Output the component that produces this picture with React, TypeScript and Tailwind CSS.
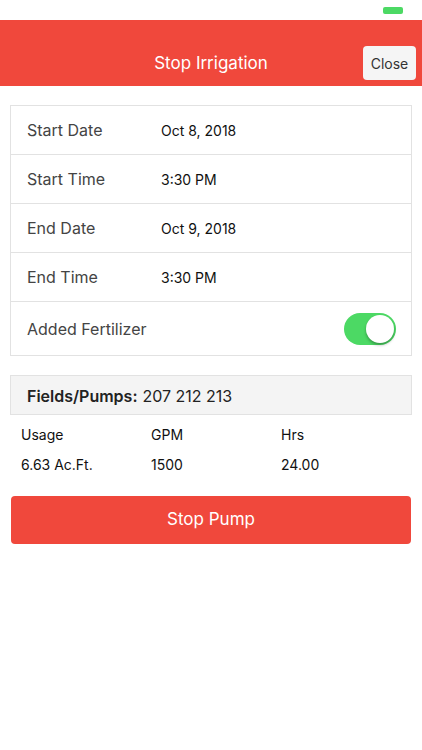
import React from "react";

const rows = [
  { label: "Start Date", value: "Oct 8, 2018" },
  { label: "Start Time", value: "3:30 PM" },
  { label: "End Date", value: "Oct 9, 2018" },
  { label: "End Time", value: "3:30 PM" },
];

export default function App() {
  return (
    <div
      className="w-[422px] h-[750px] bg-white flex flex-col"
      style={{ fontFamily: 'Inter, "Liberation Sans", sans-serif' }}
    >
      <div className="h-[20px] flex justify-end items-start pr-[19px] pt-[7px]">
        <div className="w-[20px] h-[7px] rounded-[2px] bg-[#4cd964]" />
      </div>
      <div className="h-[66px] bg-[#f0483c] relative flex items-end justify-center pb-[12px]">
        <span className="text-white text-[17px] leading-[22px]">Stop Irrigation</span>
        <div className="absolute right-[6px] top-[26px] w-[53px] h-[34px] rounded-[4px] bg-[#f5f5f5] flex items-center justify-center text-[14px] text-[#333]">
          Close
        </div>
      </div>

      <div className="mx-[10px] mt-[19px] border border-[#e2e2e2]">
        {rows.map((r) => (
          <div key={r.label} className="h-[49px] flex items-center border-b border-[#e2e2e2]">
            <span className="w-[150px] pl-[16px] text-[16px] text-[#444]">{r.label}</span>
            <span className="text-[14px] text-[#111]">{r.value}</span>
          </div>
        ))}
        <div className="h-[53px] flex items-center justify-between pl-[16px] pr-[15px]">
          <span className="text-[16px] text-[#444]">Added Fertilizer</span>
          <div className="w-[52px] h-[32px] rounded-full bg-[#4cd964] relative">
            <div className="absolute right-[2px] top-[2px] w-[28px] h-[28px] rounded-full bg-white shadow-[0_2px_3px_rgba(0,0,0,0.3)]" />
          </div>
        </div>
      </div>

      <div className="mx-[10px] mt-[19px] h-[40px] bg-[#f4f4f4] border border-[#e2e2e2] flex items-center pl-[16px] pt-[2px] text-[16px] text-[#222]">
        <span className="font-semibold">Fields/Pumps:</span>
        <span className="ml-[5px]">207 212 213</span>
      </div>

      <div className="grid grid-cols-[130px_130px_1fr] pl-[21px] mt-[10px] text-[14px] text-[#111] leading-[20px] gap-y-[10px]">
        <span>Usage</span>
        <span>GPM</span>
        <span>Hrs</span>
        <span>6.63 Ac.Ft.</span>
        <span>1500</span>
        <span>24.00</span>
      </div>

      <div className="mx-[11px] mt-[21px] h-[48px] rounded-[4px] bg-[#f0483c] flex items-center justify-center text-white text-[17px]">
        Stop Pump
      </div>
    </div>
  );
}
